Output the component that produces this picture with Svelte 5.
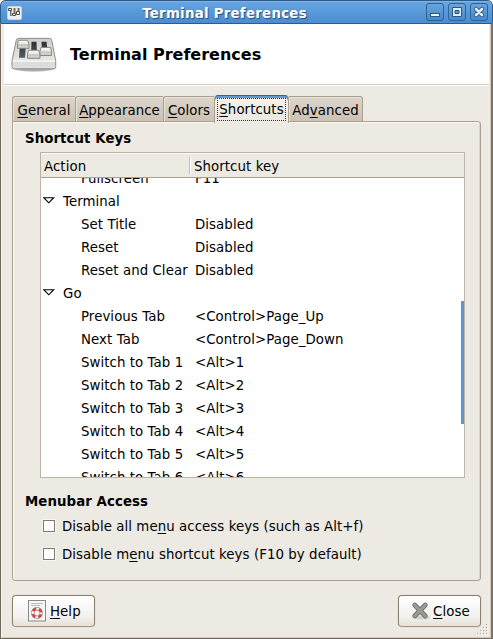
<script>
  const tabs = [
    { a: '', k: 'G', b: 'eneral', w: 63 },
    { a: '', k: 'A', b: 'ppearance', w: 88 },
    { a: '', k: 'C', b: 'olors', w: 51 },
    { a: '', k: 'S', b: 'hortcuts', w: 75, active: true },
    { a: 'Ad', k: 'v', b: 'anced', w: 74 }
  ];
  const rows = [
    { name: 'Fullscreen', key: 'F11' },
    { name: 'Terminal', group: true },
    { name: 'Set Title', key: 'Disabled' },
    { name: 'Reset', key: 'Disabled' },
    { name: 'Reset and Clear', key: 'Disabled' },
    { name: 'Go', group: true },
    { name: 'Previous Tab', key: '<Control>Page_Up' },
    { name: 'Next Tab', key: '<Control>Page_Down' },
    ...[1, 2, 3, 4, 5, 6].map((n) => ({ name: `Switch to Tab ${n}`, key: `<Alt>${n}` }))
  ];
  const grip = [[9, 0], [6, 3], [9, 3], [3, 6], [6, 6], [9, 6], [0, 9], [3, 9], [6, 9], [9, 9]];
</script>

<div class="window">
  <header class="titlebar">
    <svg class="appicon" width="16" height="16" viewBox="0 0 16 16">
      <rect x=".5" y=".5" width="14" height="13" rx="1.500" fill="#eeeeec" stroke="#d5cfc6" />
      <path d="M3 5h1.500v5H3zM6.500 2h2v5h-2zM10.500 2h2v3h-2z" fill="#6d706c" />
      <path d="M1.500 2.500h3v2h-3zM5.500 7.500h3v2h-3zM9.500 5.500h3v3h-3z" fill="#eee" stroke="#4a4e4f" />
    </svg>
    <span class="caption">Terminal Preferences</span>
    <div class="controls">
      <span class="ctl"><svg width="18" height="18"><rect x="4.500" y="10.500" width="9" height="3" fill="#eef5fc" stroke="#275987" /></svg></span>
      <span class="ctl"><svg width="18" height="18"><path d="M4.500 4.500h9v9h-9zM7 7.500h4v3h-4z" fill="#e3eefa" fill-rule="evenodd" stroke="#275987" /></svg></span>
      <span class="ctl"><svg width="18" height="18"><path d="M6 6l6 6m0-6l-6 6" stroke="#275987" stroke-width="4.500" stroke-linecap="round" /><path d="M6 6l6 6m0-6l-6 6" stroke="#e3eefa" stroke-width="2.600" stroke-linecap="round" /></svg></span>
    </div>
  </header>

  <div class="body">
    <div class="banner">
      <svg width="48" height="38" viewBox="0 0 48 40" preserveAspectRatio="none">
        <defs>
          <linearGradient id="plate" x1="0" y1="0" x2="0" y2="1"><stop offset="0" stop-color="#cfcfcc" /><stop offset="1" stop-color="#efefed" /></linearGradient>
          <linearGradient id="knob" x1="0" y1="0" x2="0" y2="1"><stop offset="0" stop-color="#fff" /><stop offset="1" stop-color="#c6c8c1" /></linearGradient>
          <linearGradient id="slot" x1="0" y1="0" x2="0" y2="1"><stop offset="0" stop-color="#2b2f31" /><stop offset="1" stop-color="#536064" /></linearGradient>
          <radialGradient id="shade"><stop offset=".7" stop-color="#000" stop-opacity=".32" /><stop offset="1" stop-color="#000" stop-opacity="0" /></radialGradient>
        </defs>
        <ellipse cx="24" cy="34" rx="24" ry="4" fill="url(#shade)" />
        <path d="M8.500 2.500h31q1.800 0 2.200 2l4 21.500v6q0 2.500-2.500 2.500H4.500q-2.500 0-2.500-2.500v-6l4.300-21.500q.4-2 2.200-2z" fill="url(#plate)" stroke="#888a85" />
        <path d="M3 26.500h42v5q0 2-2 2H5q-2 0-2-2z" fill="#dcdcda" />
        <path d="M3 26.500h42" stroke="#fff" />
        <path d="M10 8h6l-1 15H9zM21.500 6h5l.5 14h-6zM31.500 6h5l1.500 13h-6z" fill="url(#slot)" />
        <path d="M8.500 4.500h9l1.500 4V13H7.500V8.500z" fill="url(#knob)" stroke="#85877f" /><path d="M8 9.500h11" stroke="#aaaca5" />
        <path d="M18.500 15h10l1.500 4v4.500H17.500V19z" fill="url(#knob)" stroke="#85877f" /><path d="M18 20h11.500" stroke="#b7b9b2" />
        <path d="M31 12h9.500l1 4v4.500h-11.500V16z" fill="url(#knob)" stroke="#85877f" /><path d="M30.500 17h10.500" stroke="#b7b9b2" />
      </svg>
      <span>Terminal Preferences</span>
    </div>

    <nav class="tabs">
      {#each tabs as t}
        <div class="tab" class:active={t.active} style:width="{t.w}px"><span class="tl">{t.a}<u>{t.k}</u>{t.b}</span></div>
      {/each}
    </nav>

    <section class="panel">
      <h2>Shortcut Keys</h2>
      <div class="tree">
        <div class="thead"><span class="c1">Action</span><span class="c2">Shortcut key</span></div>
        <div class="view">
          <div class="list">
            {#each rows as r}
              {#if r.group}
                <div class="row"><svg class="arrow" width="12" height="8"><path d="M.8.7h9.900l-4.950 5.100z" fill="#fff" stroke="#000" stroke-width="1.100" /></svg><span>{r.name}</span></div>
              {:else}
                <div class="row item"><span class="name">{r.name}</span><span>{r.key}</span></div>
              {/if}
            {/each}
          </div>
          <div class="scroll"></div>
        </div>
      </div>
      <h2 class="second">Menubar Access</h2>
      <div class="check"><i></i><span>Disable all me<u>n</u>u access keys (such as Alt+f)</span></div>
      <div class="check"><i></i><span>Disable m<u>e</u>nu shortcut keys (F10 by default)</span></div>
    </section>

    <footer>
      <div class="btn help">
        <svg width="18" height="22" viewBox="0 0 18 22">
          <rect x=".5" y=".5" width="17" height="20.500" fill="#f6f6f4" stroke="#888a85" />
          <path d="M3 3.500h12M3 5.500h9" stroke="#babdb6" />
          <circle cx="9" cy="13" r="4.300" fill="none" stroke="#777" stroke-width="3.400" />
          <circle cx="9" cy="13" r="4.300" fill="none" stroke="#f3eeee" stroke-width="2.600" />
          <circle cx="9" cy="13" r="4.300" fill="none" stroke="#d64545" stroke-width="2.600" stroke-dasharray="4 2.754" stroke-dashoffset="-1.400" />
        </svg>
        <span><u>H</u>elp</span>
      </div>
      <div class="btn close">
        <svg width="20" height="20" viewBox="0 0 20 20">
          <ellipse cx="11" cy="16.500" rx="8" ry="2" fill="#000" opacity=".12" />
          <path d="M3.700 4l10.600 11m0-11l-10.600 11" stroke="#6e716c" stroke-width="4.800" stroke-linecap="round" />
          <path d="M3.700 4l10.600 11m0-11l-10.600 11" stroke="#999c96" stroke-width="3.200" stroke-linecap="round" />
        </svg>
        <span><u>C</u>lose</span>
      </div>
    </footer>
  </div>
  <svg class="grip" width="12" height="12">
    {#each grip as [x, y]}<rect {x} {y} width="1" height="1" fill="#a89f93" /><rect x={x + 1} y={y + 1} width="1" height="1" fill="#fff" />{/each}
  </svg>
</div>

<style>
  :global(body) { margin: 0; background: #fff; }
  .window, .window * { box-sizing: border-box; }
  .window {
    position: relative; width: 493px; height: 639px; overflow: hidden;
    display: flex; flex-direction: column; background: #edeae3;
    font: 13.33px "DejaVu Sans", sans-serif; letter-spacing: .07px;
    color: #000; white-space: nowrap; border-radius: 5px 5px 0 0;
  }
  u { text-decoration: underline; text-decoration-thickness: 1px; text-underline-offset: 2px; text-decoration-skip-ink: none; }
  .titlebar {
    height: 24px; flex: none; display: flex; align-items: center; position: relative;
    border: 1px solid #2e5c8a; border-radius: 5px 5px 0 0;
    background: linear-gradient(#68a5e2, #4a8dd0); box-shadow: inset 0 1px #7db3e8;
    padding: 0 4px 0 6px;
  }
  .appicon { flex: none; margin-top: 3px; }
  .caption {
    flex: 1; text-align: center; color: #fff; font: bold 13.33px/22px "DejaVu Sans", sans-serif; letter-spacing: .27px;
    text-shadow: 1px 1px 1px #244f7c; padding-top: 3px;
  }
  .controls { display: flex; gap: 4px; }
  .ctl { width: 18px; height: 18px; border: 1px solid #2f628f; border-radius: 3px; background: linear-gradient(#69a5df, #4789cc); }
  .ctl svg { display: block; margin: -1px; }
  .body {
    flex: 1; min-height: 0; border: solid #74695d; border-width: 0 2px 1px 1px; border-right-color: #7b7265;
    box-shadow: inset 1px 0 #f6f4f0, inset -1px -1px #d5cabd;
  }
  .banner {
    height: 62px; margin: 0 2px 0 3px; display: flex; align-items: center; background: #fff;
    border-bottom: 1px solid #fff; box-shadow: inset 0 -1px #d9cbbb;
    font-weight: bold; font-size: 16px; letter-spacing: 0; padding: 0 0 0 6px;
  }
  .banner span { margin-left: 12px; }
  .tabs { display: flex; align-items: flex-end; height: 36px; padding-left: 11px; position: relative; }
  .tab {
    height: 26px; border: 1px solid #ad9f8f; border-right: 0; border-radius: 3px 0 0 0;
    background: linear-gradient(#ddd6cc, #cbc1b4); box-shadow: inset 1px 1px #e6e1d9;
    display: flex; align-items: center; justify-content: center; position: relative; padding-top: 2px;
  }
  .tab:last-child { border-right: 1px solid #ad9f8f; border-radius: 0 3px 0 0; border-left: 0; }
  .tab.active {
    height: 28px; margin-bottom: -1px; z-index: 2; background: linear-gradient(#f7f5f2, #edeae3 70%);
    border: 1px solid #ad9f8f; border-top: 0; border-bottom: 0; border-radius: 4px 4px 0 0;
    box-shadow: inset 0 1px #2f6597, inset 0 3px #5b9ddb; padding-top: 1px;
  }
  .tab.active .tl { outline: 1px dotted #333; outline-offset: 1px; line-height: 18px; padding-top: 1px; height: 19px; }
  .panel {
    width: 469px; height: 460px; margin: -1px 0 0 11px; padding: 8px 15px 0 12px;
    border: 1px solid #ad9f8f; border-radius: 0 3px 3px 3px; box-shadow: inset 1px 1px #faf9f6, inset -1px 0 #dad4ca;
  }
  h2 { margin: 0; font-size: 13.33px; font-weight: bold; line-height: 18px; height: 22px; }
  .tree { margin-left: 15px; height: 326px; width: 425px; border: 1px solid #beb4a6; display: flex; flex-direction: column; background: #fff; }
  .thead { height: 25px; flex: none; border-bottom: 1px solid #ad9f8f; background: #edeae3; box-shadow: inset 0 1px #faf9f6; display: flex; align-items: center; padding: 1px 0 0 3px; }
  .c1 { width: 146px; height: 17px; line-height: 20px; border-right: 1px solid #c8bfb3; box-shadow: 1px 0 #fff; }
  .c2 { margin-left: 4px; height: 17px; line-height: 20px; }
  .view { flex: 1; min-height: 0; overflow: hidden; position: relative; display: flex; }
  .list { margin-top: -11px; flex: 1; }
  .row { height: 23px; line-height: 23px; display: flex; align-items: center; padding-left: 2px; }
  .row.item { padding-left: 40px; }
  .arrow { margin: -2px 8px 0 0; }
  .name { width: 114px; }
  .scroll { position: absolute; right: 0; top: 123px; width: 3px; height: 123px; background: #5898d8; }
  .second { margin-top: 15px; height: 19px; }
  .check { display: flex; align-items: center; height: 28px; padding-left: 18px; }
  .check i { width: 12px; height: 12px; border: 1px solid #857867; background: #fff; margin-right: 7px; box-shadow: 0 0 0 1px #f7f5f1; }
  footer { display: flex; justify-content: space-between; margin: 14px 10px 0 11px; }
  .btn {
    width: 83px; height: 32px; border: 1px solid #8d7f6e; border-bottom-color: #a5957f; border-radius: 4px;
    background: linear-gradient(#fff, #f3f1ed 70%, #e6e1d9); box-shadow: 0 0 0 1px #e7e2da;
    display: flex; align-items: center;
  }
  .help { padding-left: 15px; }
  .help span { margin-left: 4px; }
  .close { padding-left: 12px; }
  .close span { margin-left: 2px; }
  .grip { position: absolute; right: 4px; bottom: 3px; }
</style>
